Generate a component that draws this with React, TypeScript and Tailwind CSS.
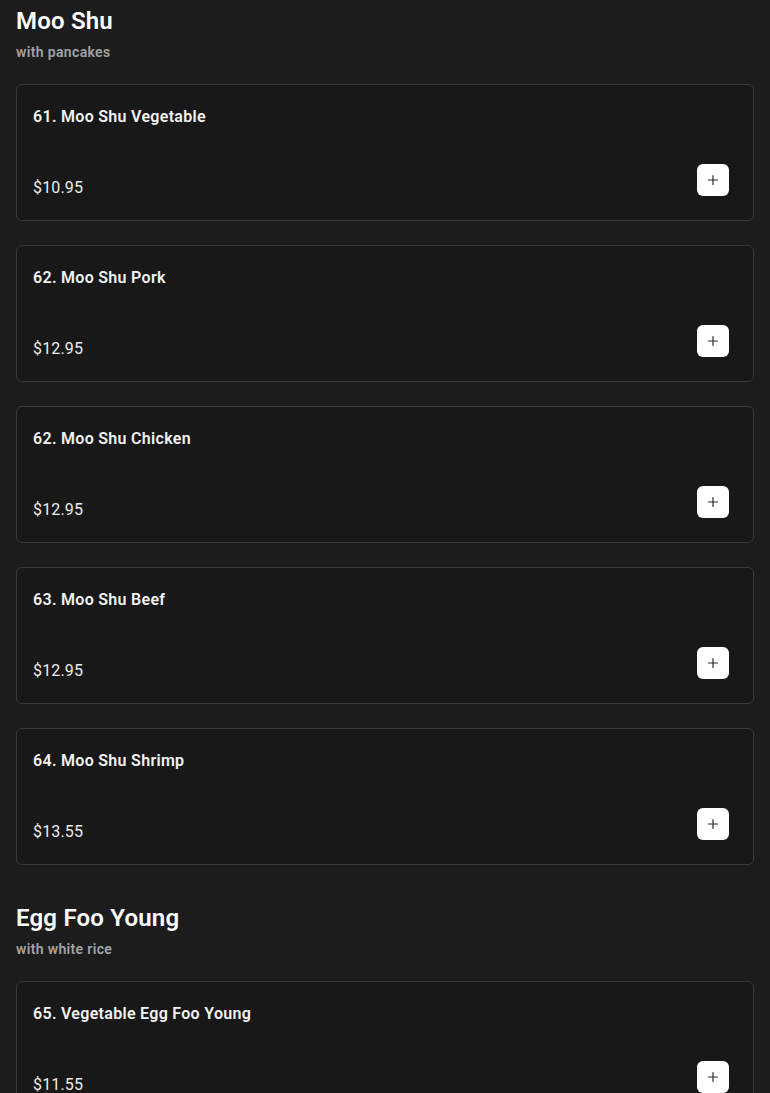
import React from "react";

type Item = { name: string; price: string };

const sections: { title: string; subtitle: string; items: Item[] }[] = [
  {
    title: "Moo Shu",
    subtitle: "with pancakes",
    items: [
      { name: "61. Moo Shu Vegetable", price: "$10.95" },
      { name: "62. Moo Shu Pork", price: "$12.95" },
      { name: "62. Moo Shu Chicken", price: "$12.95" },
      { name: "63. Moo Shu Beef", price: "$12.95" },
      { name: "64. Moo Shu Shrimp", price: "$13.55" },
    ],
  },
  {
    title: "Egg Foo Young",
    subtitle: "with white rice",
    items: [{ name: "65. Vegetable Egg Foo Young", price: "$11.55" }],
  },
];

function PlusIcon() {
  return (
    <svg width="12" height="12" viewBox="0 0 12 12" fill="none">
      <path d="M6 1.5v9M1.5 6h9" stroke="#2a2a2a" strokeWidth="1.2" strokeLinecap="round" />
    </svg>
  );
}

function Card({ item }: { item: Item }) {
  return (
    <div className="rounded-md border border-[#3a3a3a] bg-[#181818] pl-4 pr-6 pt-5 pb-[21px]">
      <div className="text-base leading-6 font-semibold tracking-[0.3px] text-[#f2f2f2]">{item.name}</div>
      <div className="mt-[35px] flex items-end justify-between">
        <div className="mb-[-1px] text-base leading-6 tracking-[0.15px] text-[#ececec]">{item.price}</div>
        <button className="mb-[3px] flex h-8 w-8 items-center justify-center rounded-md bg-white">
          <PlusIcon />
        </button>
      </div>
    </div>
  );
}

export default function App() {
  return (
    <div
      className="h-[1093px] overflow-hidden bg-[#1c1c1c] px-4 pt-[5px]"
      style={{ fontFamily: "Roboto, 'Noto Sans', sans-serif" }}
    >
      {sections.map((s, i) => (
        <section key={s.title} className={i > 0 ? "mt-[37px]" : ""}>
          <h2 className="text-2xl leading-8 font-semibold tracking-[0.2px] text-white">{s.title}</h2>
          <p className="mt-[5px] text-sm leading-5 font-semibold tracking-[0.35px] text-[#a3a3a3]">{s.subtitle}</p>
          <div className="mt-[22px] flex flex-col gap-6">
            {s.items.map((it) => (
              <Card key={it.name} item={it} />
            ))}
          </div>
        </section>
      ))}
    </div>
  );
}
